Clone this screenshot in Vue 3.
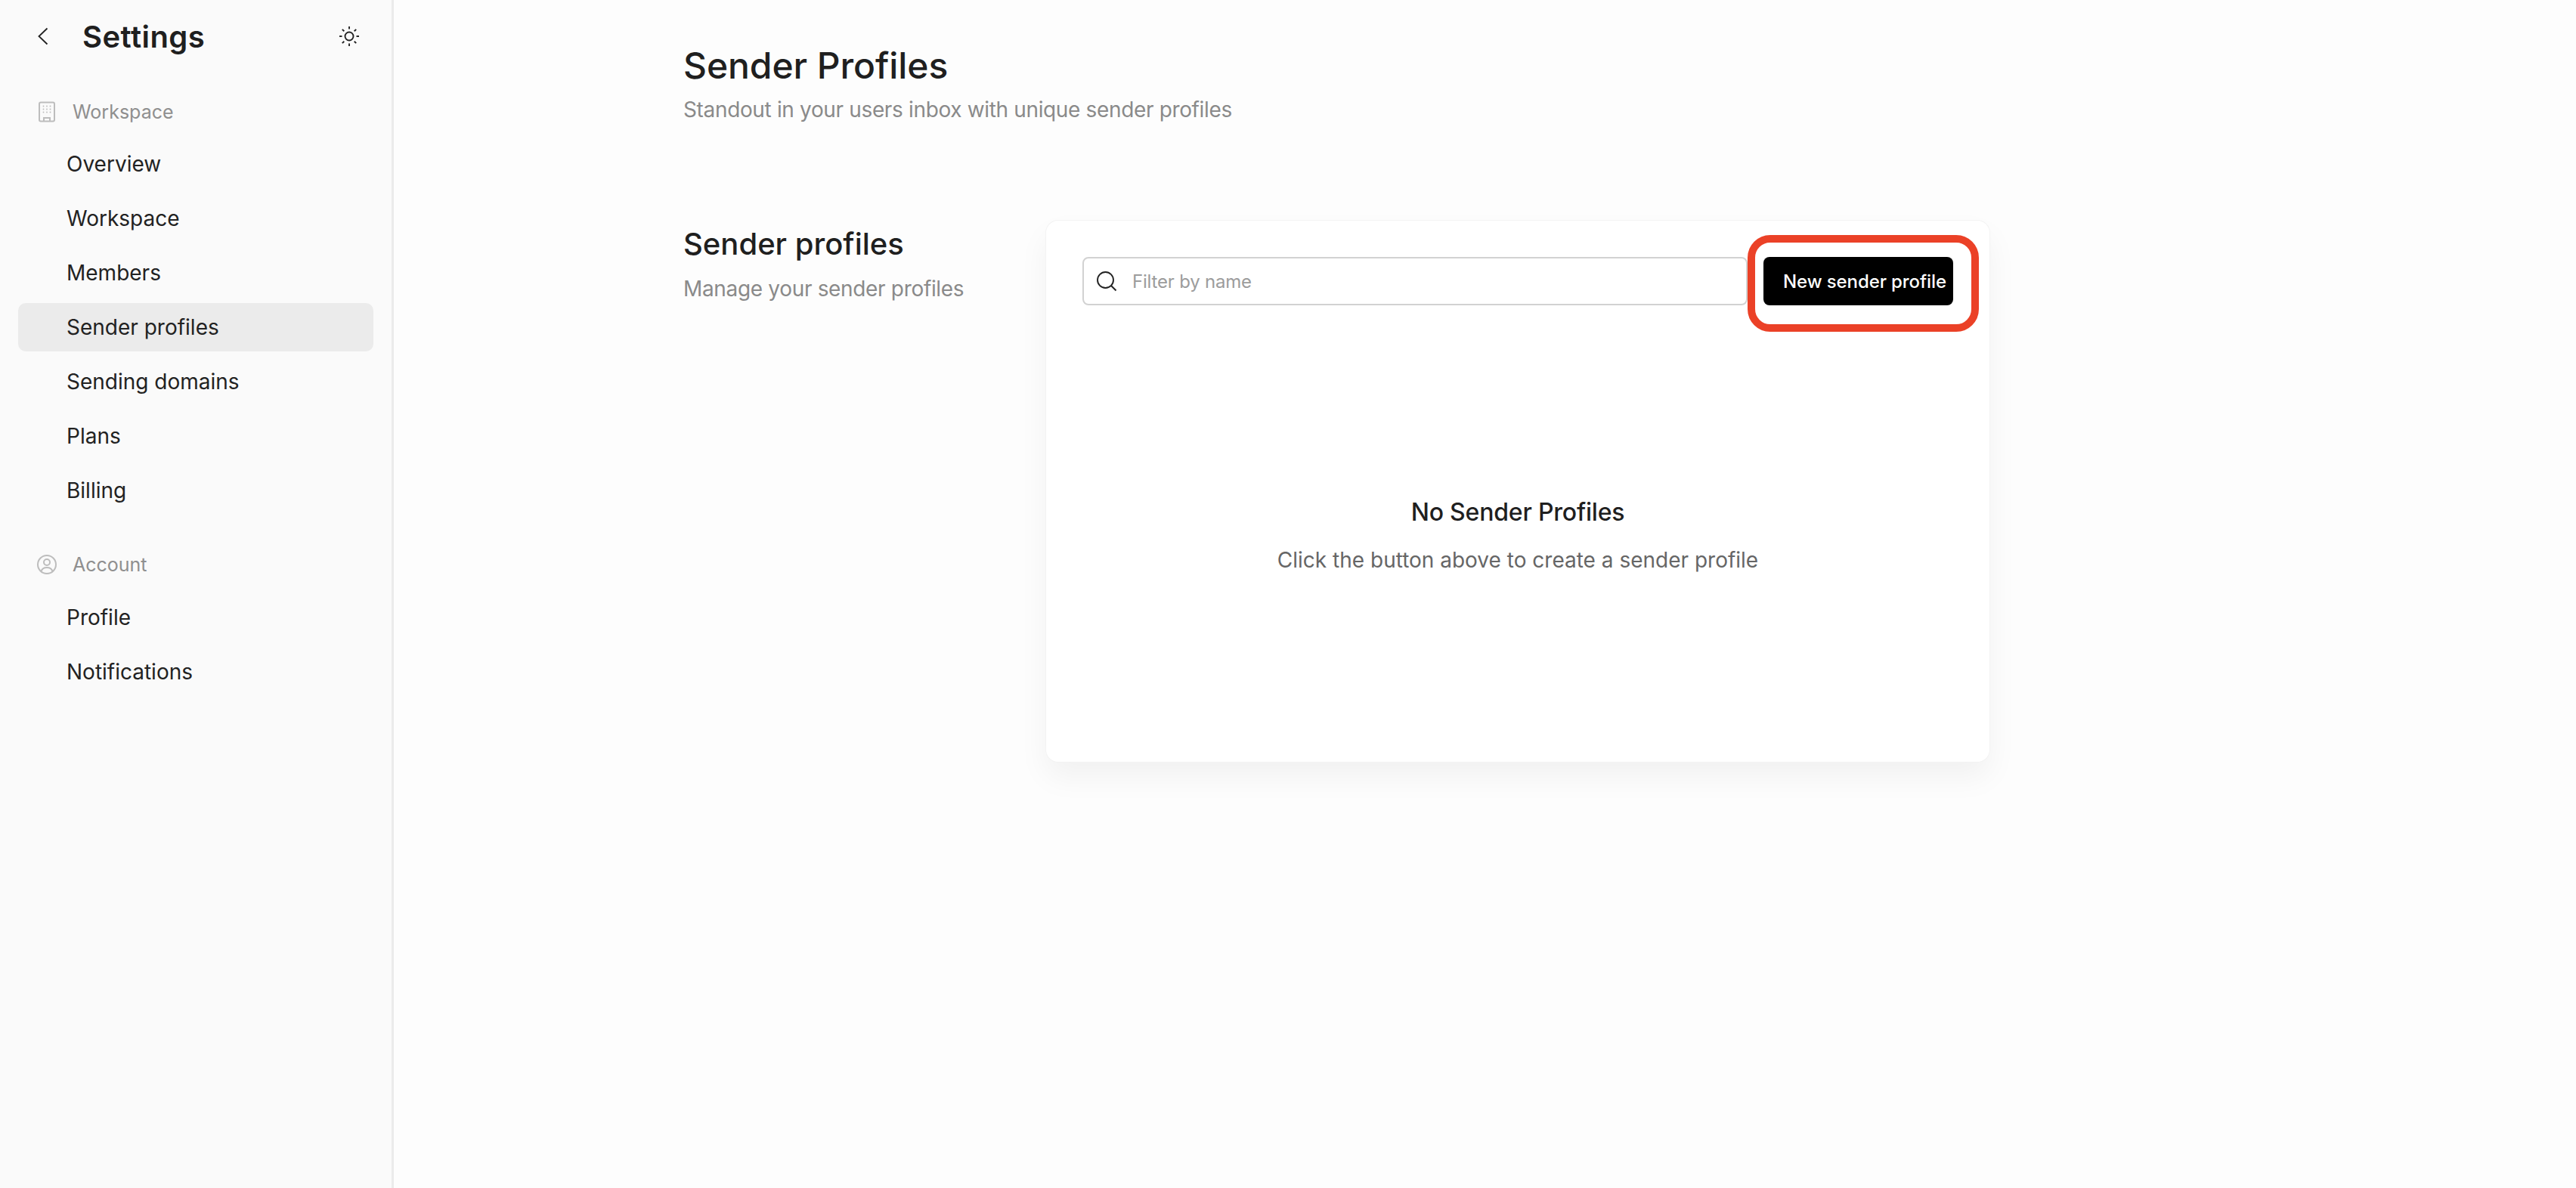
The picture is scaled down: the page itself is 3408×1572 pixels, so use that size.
<script setup>
const workspaceLinks = ["Overview", "Workspace", "Members", "Sender profiles", "Sending domains", "Plans", "Billing"];
const accountLinks = ["Profile", "Notifications"];
const buildingDots = [];
for (let row = 0; row < 3; row++) {
  for (let col = 0; col < 3; col++) {
    buildingDots.push({ x: 9.5 + col * 4.5, y: 6.5 + row * 4 });
  }
}
const sunRays = [0, 45, 90, 135, 180, 225, 270, 315];
</script>

<template>
  <div class="page">
    <aside class="sidebar">
      <div class="head">
        <svg class="back" width="14" height="24" viewBox="0 0 14 24" fill="none" stroke="#222" stroke-width="1.8">
          <path d="M12.5 1.5 1.5 12l11 10.5" />
        </svg>
        <h1>Settings</h1>
        <svg class="sun" width="28" height="28" viewBox="0 0 28 28" fill="none" stroke="#222" stroke-width="1.9">
          <circle cx="14" cy="14" r="5.500" />
          <line v-for="r in sunRays" :key="r" x1="14" y1="1" x2="14" y2="4.500" :transform="`rotate(${r} 14 14)`" />
        </svg>
      </div>

      <div class="group-label">
        <svg width="28" height="28" viewBox="0 0 28 28" fill="none" stroke="#bdbdbd" stroke-width="2">
          <rect x="4" y="1.500" width="20" height="25" rx="2" />
          <path d="M10 26v-4h8v4" />
          <circle v-for="(d, i) in buildingDots" :key="i" :cx="d.x" :cy="d.y" r="0.9" fill="#bdbdbd" stroke="none" />
        </svg>
        <span>Workspace</span>
      </div>
      <nav class="links">
        <a v-for="link in workspaceLinks" :key="link" class="link" :class="{ active: link === 'Sender profiles' }">{{ link }}</a>
      </nav>

      <div class="group-label account">
        <svg width="28" height="28" viewBox="0 0 28 28" fill="none" stroke="#bdbdbd" stroke-width="2">
          <circle cx="14" cy="14" r="12" />
          <circle cx="14" cy="11" r="4" />
          <path d="M6.500 23c1-3.500 3.500-5 7.500-5s6.500 1.500 7.500 5" />
        </svg>
        <span>Account</span>
      </div>
      <nav class="links">
        <a v-for="link in accountLinks" :key="link" class="link">{{ link }}</a>
      </nav>
    </aside>

    <main class="content">
      <header class="title">
        <h2>Sender Profiles</h2>
        <p>Standout in your users inbox with unique sender profiles</p>
      </header>

      <section class="section">
        <div class="section-info">
          <h3>Sender profiles</h3>
          <p>Manage your sender profiles</p>
        </div>

        <div class="card">
          <div class="toolbar">
            <label class="search">
              <svg width="28" height="28" viewBox="0 0 28 28" fill="none" stroke="#222" stroke-width="1.9">
                <circle cx="12.500" cy="12.500" r="10.500" />
                <path d="m20 20 6.500 6.500" />
              </svg>
              <input type="text" placeholder="Filter by name" />
            </label>
            <div class="button-wrap">
              <button class="new-btn">New sender profile</button>
              <span class="highlight"></span>
            </div>
          </div>

          <div class="empty">
            <h4>No Sender Profiles</h4>
            <p>Click the button above to create a sender profile</p>
          </div>
        </div>
      </section>
    </main>
  </div>
</template>

<style>
html,
body {
  margin: 0;
  background: #fdfdfd;
}
</style>

<style scoped>
.page {
  display: flex;
  height: 1572px;
  overflow: hidden;
  font-family: Inter, "Liberation Sans", sans-serif;
  color: #1f1f1f;
  background: #fdfdfd;
}

.sidebar {
  width: 518px;
  flex-shrink: 0;
  background: #fafafa;
  border-right: 3px solid #ebebeb;
}

.head {
  display: flex;
  align-items: center;
  height: 96px;
  padding-left: 50px;
}
.head h1 {
  margin: 0 0 0 45px;
  font-size: 40px;
  font-weight: 600;
  letter-spacing: 0.45px;
}
.back {
  flex-shrink: 0;
}
.sun {
  margin-left: auto;
  margin-right: 42px;
}

.group-label {
  display: flex;
  align-items: center;
  gap: 20px;
  height: 40px;
  margin: 32px 0 17px 48px;
  font-size: 25px;
  color: #8f8f8f;
}
.group-label svg {
  flex-shrink: 0;
}
.group-label.account {
  margin-top: 46px;
  margin-bottom: 18px;
}

.links {
  display: flex;
  flex-direction: column;
  gap: 8px;
  margin: 0 24px;
}
.link {
  display: flex;
  align-items: center;
  height: 64px;
  padding-left: 64px;
  border-radius: 10px;
  font-size: 28px;
  color: #222;
}
.link.active {
  background: #ebebeb;
}

.content {
  flex: 1;
  padding-left: 383px;
}
.title {
  padding-top: 58px;
}
.title h2 {
  margin: 0;
  font-size: 48px;
  line-height: 58px;
  font-weight: 500;
  letter-spacing: -0.07px;
}
.title p {
  margin: 9px 0 0;
  font-size: 28px;
  line-height: 40px;
  letter-spacing: -0.35px;
  color: #8a8a8a;
}

.section {
  display: flex;
  margin-top: 127px;
}
.section-info {
  width: 480px;
  flex-shrink: 0;
  padding-top: 6px;
}
.section-info h3 {
  margin: 0;
  font-size: 40px;
  line-height: 50px;
  font-weight: 500;
}
.section-info p {
  margin: 14px 0 0;
  font-size: 28px;
  line-height: 40px;
  letter-spacing: -0.33px;
  color: #8a8a8a;
}

.card {
  box-sizing: border-box;
  width: 1248px;
  height: 716px;
  padding: 48px;
  background: #fff;
  border-radius: 16px;
  box-shadow: 0 0 0 1px #f3f3f3, 0 20px 40px rgba(0, 0, 0, 0.05);
}
.toolbar {
  display: flex;
  gap: 21px;
}
.search {
  flex: 1;
  display: flex;
  align-items: center;
  gap: 20px;
  height: 64px;
  box-sizing: border-box;
  padding-left: 16px;
  border: 2px solid #d2d2d2;
  border-radius: 8px;
}
.search svg {
  flex-shrink: 0;
}
.search input {
  flex: 1;
  min-width: 0;
  padding: 0;
  border: none;
  outline: none;
  background: none;
  font: inherit;
  font-size: 24px;
  letter-spacing: -0.2px;
  color: #222;
}
.search input::placeholder {
  color: #9c9c9c;
}
.button-wrap {
  position: relative;
}
.new-btn {
  display: block;
  width: 251px;
  height: 64px;
  padding: 0 0 0 26px;
  border: none;
  border-radius: 8px;
  background: #000;
  color: #fff;
  font-family: inherit;
  font-size: 24px;
  font-weight: 500;
  letter-spacing: -0.1px;
  text-align: left;
  white-space: nowrap;
}
.highlight {
  position: absolute;
  top: -29px;
  left: -21px;
  right: -34px;
  bottom: -35px;
  border: 10px solid #eb4127;
  border-radius: 30px;
}

.empty {
  margin-top: 252px;
  text-align: center;
}
.empty h4 {
  margin: 0;
  font-size: 32px;
  line-height: 44px;
  font-weight: 500;
  letter-spacing: -0.2px;
  color: #1f1f1f;
}
.empty p {
  margin: 19px 0 0;
  font-size: 28px;
  line-height: 44px;
  color: #666;
}
</style>
